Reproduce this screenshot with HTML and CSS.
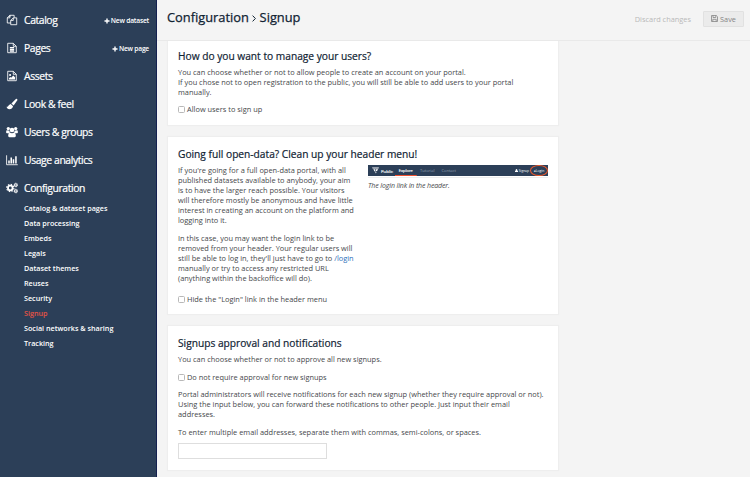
FILE: index.html
```html
<!DOCTYPE html>
<html lang="en">
<head>
<meta charset="utf-8">
<title>Configuration &gt; Signup</title>
<link rel="stylesheet" href="styles.css">
</head>
<body>
<div class="app">
  <nav class="sidebar">
    <a class="item"><svg class="icon" viewBox="0 0 14 14"><path d="M4.500 3.500V1.500H9.500V4.200M4.500 1.500L1.500 4.500V10.500H5.500M4.500 1.500V4.500H1.500M8.500 4.500H12.500V12.500H5.500V7.500ZM8.500 4.500V7.500H5.500"/></svg><span class="label">Catalog</span><span class="new"><svg class="plus" viewBox="0 0 6 6"><path d="M3 .5V5.500M.5 3H5.500"/></svg>New dataset</span></a>
    <a class="item"><svg class="icon" viewBox="0 0 14 14"><path d="M2 1.500H8.500L12 5V12.500H2ZM8.500 1.500V5H12"/><path d="M4.500 6.500H9.500M4.500 8.500H9.500M4.500 10.500H9.500" stroke-width="1.500"/></svg><span class="label">Pages</span><span class="new"><svg class="plus" viewBox="0 0 6 6"><path d="M3 .5V5.500M.5 3H5.500"/></svg>New page</span></a>
    <a class="item"><svg class="icon" viewBox="0 0 14 14"><path d="M2 1.500H8.500L12 5V12.500H2ZM8.500 1.500V5H12"/><path class="solid" d="M3.500 11V9.500L5 8.200L6 9L8.500 6.500L10.500 8.500V11Z"/><circle class="solid" cx="4.800" cy="5.800" r="1.200"/></svg><span class="label">Assets</span></a>
    <a class="item"><svg class="icon" viewBox="0 0 14 14"><path class="solid" d="M12.900 1.100C13.600 1.800 13.300 2.500 12.800 3.300L8.900 8.700L6.300 6.500L11.200 1.500C11.800.9 12.400.6 12.900 1.100ZM5.500 7.100L8.200 9.500C7.800 12 6.100 13 4 13C2.100 13 .9 11.700.7 10.200C2.900 11 2.600 7.700 5.500 7.100Z"/></svg><span class="label">Look &amp; feel</span></a>
    <a class="item"><svg class="icon" viewBox="0 0 14 14"><g class="solid"><circle cx="2.700" cy="3" r="1.900"/><circle cx="11.300" cy="3" r="1.900"/><circle cx="7" cy="4.700" r="2.700"/><path d="M.2 8V6.500Q.2 5.200 1.200 5.100L4 5.500Q4 7 5 7.600Q3.600 7.400 3 8.500H1Q.2 8.500.2 8ZM13.800 8V6.500Q13.800 5.200 12.800 5.100L10 5.500Q10 7 9 7.600Q10.400 7.400 11 8.500H13Q13.800 8.500 13.800 8ZM4.500 7.500Q7 9.200 9.500 7.500Q11.500 8 11.500 11.500Q11.500 13 10 13H4Q2.500 13 2.500 11.500Q2.500 8 4.500 7.500Z"/></g></svg><span class="label">Users &amp; groups</span></a>
    <a class="item"><svg class="icon" viewBox="0 0 14 14"><path d="M.7 1.500V12.500H13.700"/><path d="M3.500 11.200V7.500M6.100 11.200V4M8.700 11.200V6M11.600 11.200V2.500" stroke-width="1.800"/></svg><span class="label">Usage analytics</span></a>
    <a class="item"><svg class="icon" viewBox="0 0 14 14"><circle cx="5" cy="7" r="2.700" stroke-width="2.100"/><circle cx="5" cy="7" r="4.200" stroke-width="1.300" stroke-dasharray="1.650 1.649"/><circle cx="11.500" cy="3.500" r="1.500" stroke-width="1.300"/><circle cx="11.500" cy="10.500" r="1.500" stroke-width="1.300"/><circle cx="11.500" cy="3.500" r="2.300" stroke-width=".6" stroke-dasharray="1 .8"/><circle cx="11.500" cy="10.500" r="2.300" stroke-width=".6" stroke-dasharray="1 .8"/></svg><span class="label">Configuration</span></a>
    <div class="subnav">
      <a>Catalog &amp; dataset pages</a>
      <a>Data processing</a>
      <a>Embeds</a>
      <a>Legals</a>
      <a>Dataset themes</a>
      <a>Reuses</a>
      <a>Security</a>
      <a class="active">Signup</a>
      <a>Social networks &amp; sharing</a>
      <a>Tracking</a>
    </div>
  </nav>
  <main class="main">
    <header class="topbar">
      <h1>Configuration <svg class="chevron" viewBox="0 0 4 7"><path d="M.6.6L3.400 3.500L.6 6.400"/></svg> Signup</h1>
      <span class="discard">Discard changes</span>
      <button class="save"><svg viewBox="0 0 7 7"><path d="M.5.500H5.300L6.500 1.700V6.500H.5ZM2 .5V2.500H4.800V.5M1.800 6.500V4.300H5.200V6.500"/></svg>Save</button>
    </header>
    <div class="cards">
      <section class="card users">
        <h2>How do you want to manage your users?</h2>
        <p>You can choose whether or not to allow people to create an account on your portal.<br>If you chose not to open registration to the public, you will still be able to add users to your portal<br>manually.</p>
        <label class="check"><i class="box"></i>Allow users to sign up</label>
      </section>
      <section class="card login">
        <h2>Going full open-data? Clean up your header menu!</h2>
        <div class="columns">
          <div class="copy">
            <p>If you're going for a full open-data portal, with all<br>published datasets available to anybody, your aim<br>is to have the larger reach possible. Your visitors<br>will therefore mostly be anonymous and have little<br>interest in creating an account on the platform and<br>logging into it.</p>
            <p>In this case, you may want the login link to be<br>removed from your header. Your regular users will<br>still be able to log in, they'll just have to go to <a class="link">/login</a><br>manually or try to access any restricted URL<br>(anything within the backoffice will do).</p>
          </div>
          <figure>
            <div class="preview">
              <svg class="logo" viewBox="0 0 8 7"><path d="M0 0H8L7.400 1.200H.8ZM1.500 2H3.800V4.500H3ZM4.500 2H7L5.800 4H4.500ZM3.500 5H5.200L4.500 6.800Z"/></svg>
              <span class="brand">Public</span><span class="tab current">Explore</span><span class="tab">Tutorial</span><span class="tab">Contact</span>
              <span class="account"><svg viewBox="0 0 4 4"><path d="M0 4V3Q0 2.200 1 2L1 1A1 1 0 0 1 3 1V2Q4 2.200 4 3V4Z"/></svg>Signup</span><span class="signin">&#9679;Login</span>
            </div>
            <figcaption>The login link in the header.</figcaption>
          </figure>
        </div>
        <label class="check"><i class="box"></i>Hide the "Login" link in the header menu</label>
      </section>
      <section class="card approval">
        <h2>Signups approval and notifications</h2>
        <p>You can choose whether or not to approve all new signups.</p>
        <label class="check"><i class="box"></i>Do not require approval for new signups</label>
        <p>Portal administrators will receive notifications for each new signup (whether they require approval or not).<br>Using the input below, you can forward these notifications to other people. Just input their email<br>addresses.</p>
        <p>To enter multiple email addresses, separate them with commas, semi-colons, or spaces.</p>
        <input class="emails" type="text" aria-label="Email addresses">
      </section>
    </div>
  </main>
</div>
</body>
</html>
```
FILE: styles.css
```css
* { box-sizing: border-box; }
body { margin: 0; background: #f4f4f4; color: #46484b; font: 7.42px/10px "Open Sans", sans-serif; overflow: hidden; }
h1, h2, p, figure { margin: 0; }
svg { flex: none; fill: none; stroke: currentColor; }
.app { display: flex; height: 477px; }

.sidebar { width: 157px; flex: none; padding-top: 6px; background: #2c3f58; border-right: 1px solid #142050; color: #fff; }
.item { display: flex; align-items: center; height: 28px; padding: 0 7px 0 6px; }
.icon { width: 12px; height: 12px; margin-right: 6px; }
.solid { fill: currentColor; stroke: none; }
.label { font-size: 10.4px; line-height: 14px; letter-spacing: -.41px; -webkit-text-stroke: .2px; }
.new { display: flex; align-items: center; margin-left: auto; padding-top: 1px; font-size: 6.7px; font-weight: 600; letter-spacing: -.22px; white-space: nowrap; }
.plus { width: 6px; height: 6px; margin-right: 1px; stroke-width: 1.400; }
.subnav { display: flex; flex-direction: column; margin: -1px 0 0 24px; font-size: 7.2px; font-weight: 600; line-height: 15px; }
.subnav .active { color: #e55345; }

.main { flex: 1; }
.topbar { display: flex; align-items: center; height: 41px; padding: 0 6px 3px 10px; border-bottom: 1px solid #e9e9e9; }
h1 { margin: -3px auto 0 0; color: #102333; font-size: 12.85px; font-weight: 400; line-height: 16px; -webkit-text-stroke: .25px; }
.chevron { width: 4px; height: 7px; }
.discard { margin-right: 12px; color: #b9b9b9; font-size: 7.4px; }
.save { display: flex; align-items: center; justify-content: center; width: 41px; height: 16px; padding: 0; border: 1px solid #e1e1e1; border-radius: 1px; background: #ebebeb; color: #858585; font: 7.3px "Open Sans", sans-serif; }
.save svg { width: 7px; height: 7px; margin-right: 2px; stroke-width: .8; }

.cards { display: flex; flex-direction: column; gap: 12px; width: 390px; margin-left: 11px; }
.card { padding: 9px 10px 0; background: #fff; box-shadow: 0 0 1px 1px #eee; white-space: nowrap; }
.users { height: 84px; clip-path: inset(0 -2px -2px); }
.login { height: 177px; padding-top: 11px; }
.approval { height: 144px; padding-top: 11px; }
h2 { margin-bottom: 4px; color: #102333; font-size: 10.2px; font-weight: 400; line-height: 13px; -webkit-text-stroke: .2px; }
.check { display: flex; align-items: center; height: 10px; margin: 7px 0; }
.box { width: 7px; height: 7px; margin-right: 2px; border: 1px solid #b8b8b8; border-radius: 1.5px; background: #fff; }
.columns { display: flex; }
.copy { width: 190px; }
.copy p + p { margin-top: 8px; }
.login .check { margin-top: 11px; }
.approval .check { margin-top: 8px; }
.approval p + p { margin-top: 8px; }
.link { color: #2d70ba; }
.emails { display: block; width: 149px; height: 16px; margin-top: 6px; border: 1px solid #dedede; background: #fff; outline: 0; }

figure { width: 180px; }
.preview { display: flex; align-items: center; height: 11px; padding-left: 4px; background: #2c3f58; color: #fff; font-size: 4px; line-height: 6px; }
.logo { width: 7px; height: 7px; margin-right: 2px; fill: #fff; stroke: none; }
.brand { width: 14px; font-size: 4.3px; -webkit-text-stroke: .15px; }
.tab { width: 21.5px; color: #93a0b0; text-align: center; }
.current { align-self: flex-start; height: 11px; background: linear-gradient(#f0502f, #f0502f) bottom / 100% 1px no-repeat; color: #fff; line-height: 11px; -webkit-text-stroke: .15px; }
.account { display: flex; align-items: center; margin-left: auto; font-size: 3.2px; }
.account svg { width: 3px; height: 3px; fill: #fff; stroke: none; margin-right: 1px; }
.signin { width: 18px; height: 11px; margin-left: 1px; border: 1px solid #ee5a2b; border-radius: 50%; text-align: center; line-height: 9px; font-size: 3.4px; }
figcaption { margin-top: 1px; padding-top: 3px; border-top: 1px solid #eee; font-size: 7px; font-style: italic; letter-spacing: -.13px; }
```
